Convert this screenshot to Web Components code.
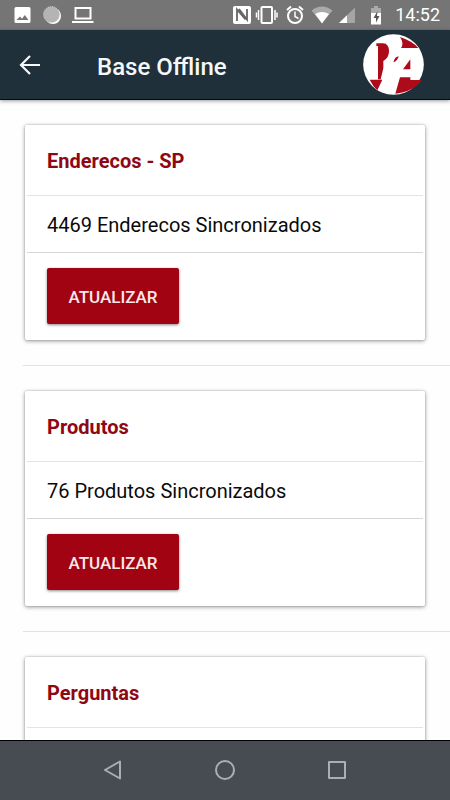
<!DOCTYPE html>
<html lang="pt-BR">
<head>
<meta charset="utf-8">
<meta name="viewport" content="width=device-width, initial-scale=1">
<title>Base Offline</title>
<style>
  body { margin: 0; font-family: Roboto, "Liberation Sans", sans-serif; background: #fefefe; }
</style>
</head>
<body>
<app-screen>
  <status-bar slot="status" time="14:52"></status-bar>
  <app-header slot="header">Base Offline</app-header>
  <sync-card action="ATUALIZAR"><span slot="title">Enderecos - SP</span>4469 Enderecos Sincronizados</sync-card>
  <sync-card action="ATUALIZAR"><span slot="title">Produtos</span>76 Produtos Sincronizados</sync-card>
  <sync-card><span slot="title">Perguntas</span></sync-card>
  <system-nav slot="nav"></system-nav>
</app-screen>
<script>
const define = (name, html) => customElements.define(name, class extends HTMLElement {
  constructor() {
    super();
    this.attachShadow({ mode: "open" }).innerHTML = html;
  }
  connectedCallback() {
    for (const el of this.shadowRoot.querySelectorAll("[data-attr]")) {
      const value = this.getAttribute(el.dataset.attr);
      if (value) el.textContent = value;
      else el.remove();
    }
  }
});

define("app-screen", `
<style>
  :host { display: flex; flex-direction: column; height: 100vh; }
  main { flex: 1; min-height: 0; overflow: hidden; padding-top: 25px; }
</style>
<slot name="status"></slot>
<slot name="header"></slot>
<main><slot></slot></main>
<slot name="nav"></slot>`);

define("status-bar", `
<style>
  :host { display: flex; align-items: center; justify-content: space-between; height: 30px; padding: 0 10px 0 12px; background: #757575; color: #fff; font-size: 18px; }
  div { display: flex; align-items: center; }
  .left { gap: 10px; }
  svg { display: block; }
  time { margin-left: 10px; line-height: 30px; }
</style>
<div class="left">
  <svg width="20" height="20" viewBox="0 0 20 20"><path fill="#fff" fill-rule="evenodd" d="M4 2h13a1.500 1.500 0 0 1 1.500 1.500v13a1.500 1.500 0 0 1-1.500 1.500H4a1.500 1.500 0 0 1-1.500-1.500v-13A1.500 1.500 0 0 1 4 2zM4.500 15h12l-3.700-5-2.800 3.700-2-2.300z"/></svg>
  <svg width="20" height="20" viewBox="0 0 20 20"><circle cx="11" cy="11" r="8" fill="#fff"/><circle cx="9.500" cy="9.500" r="8" fill="#b4b4b4" stroke="#cacaca" stroke-dasharray="1 1"/></svg>
  <svg width="22" height="20" viewBox="0 0 22 20"><path fill="none" stroke="#fff" stroke-width="2" d="M3.500 3h15v10.500h-15z"/><path fill="#fff" d="M0 16h21.500v2H0z"/></svg>
</div>
<div>
  <svg width="154" height="26" viewBox="232 2 154 26">
    <rect x="234" y="6" width="18" height="18" rx="2" fill="#fff"/>
    <path fill="none" stroke="#666" stroke-width="1.800" d="M238 21V9.500l8.500 10M240 9l8 10.500V9"/>
    <g fill="none" stroke="#fff" stroke-width="2">
      <rect x="262.500" y="7" width="10.500" height="16" rx="1"/>
      <path d="M259.500 10v10M276 10v10" stroke-width="1.500"/><path d="M257.500 12.500v5M278 12.500v5" stroke-width="1.500"/>
      <circle cx="296" cy="16" r="7"/><path d="M296 11.500v5l3.500 2" stroke-width="1.500"/><path d="M288 10l4-3.500M304 10l-4-3.500"/>
    </g>
    <path fill="#aaa" d="M312.500 10.500q10.500-8 21 0L323 23z"/><path fill="#fff" d="M316 14q7-4 14 0l-7 9.500z"/>
    <path fill="#a5a5a5" d="M340 23L356 7.500V23z"/><path fill="#fff" d="M340 23l8-7.800V23z"/>
    <path fill="#aaa" d="M372 8h3V6h4v2h3v7h-10z"/><path fill="#fff" d="M372 13h10v11.500h-10z"/><path fill="#555" d="M378.500 11l-4 7h2.500v4.500l3.500-6.500H378z"/>
  </svg>
  <time data-attr="time"></time>
</div>`);

define("app-header", `
<style>
  :host { display: flex; align-items: center; box-sizing: border-box; height: 70px; padding: 0 26px 0 12px; background: #20303a; color: #f4f8fb; border-bottom: 1px solid #050b0f; box-shadow: 0 1px 4px #0006; position: relative; z-index: 1; }
  button { display: flex; width: 36px; height: 36px; padding: 0; border: 0; background: none; color: inherit; align-items: center; justify-content: center; }
  h1 { flex: 1; margin: 0 0 0 49px; padding-top: 4px; font-size: 24px; line-height: 32px; font-weight: 500; }
</style>
<button aria-label="Voltar"><svg width="24" height="24" viewBox="0 0 24 24" fill="none" stroke="currentColor" stroke-width="2.200"><path d="M22 12H3M12 3l-9 9 9 9"/></svg></button>
<h1><slot></slot></h1>
<svg width="61" height="61" viewBox="0 0 183 183" role="img" aria-label="RA">
  <circle cx="91.500" cy="91.500" r="91" fill="#fff"/>
  <path fill="#ad0b19" d="M40 28h20q18 1 18 24 0 20-17 29v22l-8 33H45V36h-5zM20 137h38L43 169Q29 156 20 137zM111 9q37 12 55 33h-52q10-14-3-33zM142 76v30h-22zM107 67q-3 14-16 18 2-10 8-15zM111 130h31v8h34q-22 34-79 41z"/>
</svg>`);

define("sync-card", `
<style>
  :host { display: block; height: 240px; margin-bottom: 25px; margin-left: 23px; border-bottom: 1px solid #e2e2e2; }
  article { box-sizing: border-box; height: 215px; margin: 0 25px 0 2px; padding: 0 2px; background: #fff; border-radius: 2px; box-shadow: 0 0 0 1px #0000000c, 0 1px 4px #0000006b; }
  h2 { margin: 0; padding: 22px 20px 20px; font-size: 20px; line-height: 28px; font-weight: 700; color: #8f0712; border-bottom: 1px solid #e3e3e3; }
  p { margin: 0; padding: 15px 20px 13px; min-height: 28px; font-size: 20px; line-height: 28px; color: #0a0a0a; border-bottom: 1px solid #d6d6d6; }
  button { display: block; margin: 15px 20px; min-width: 132px; height: 56px; padding: 2px 20px 0; border: 0; border-radius: 2px; background: #a20312; color: #f9e8ea; font: 500 17px Roboto, "Liberation Sans", sans-serif; box-shadow: 0 1px 3px #0007; }
</style>
<article>
  <h2><slot name="title"></slot></h2>
  <p><slot></slot></p>
  <button data-attr="action"></button>
</article>`);

define("system-nav", `
<style>
  :host { display: flex; align-items: center; justify-content: center; gap: 76px; box-sizing: border-box; height: 60px; background: #464c52; border-top: 1px solid #000; position: relative; z-index: 1; }
  button { width: 36px; height: 36px; padding: 0 0 2px; border: 0; background: none; }
  svg { display: block; margin: auto; fill: none; stroke: #a9afb4; stroke-width: 2; stroke-linejoin: round; }
</style>
<button aria-label="Voltar"><svg width="24" height="24" viewBox="0 0 24 24"><path d="M19 3.500v17L4 12z"/></svg></button>
<button aria-label="Início"><svg width="24" height="24" viewBox="0 0 24 24"><circle cx="12" cy="12" r="9"/></svg></button>
<button aria-label="Recentes"><svg width="24" height="24" viewBox="0 0 24 24"><path d="M4 4h16v16H4z"/></svg></button>`);
</script>
</body>
</html>
